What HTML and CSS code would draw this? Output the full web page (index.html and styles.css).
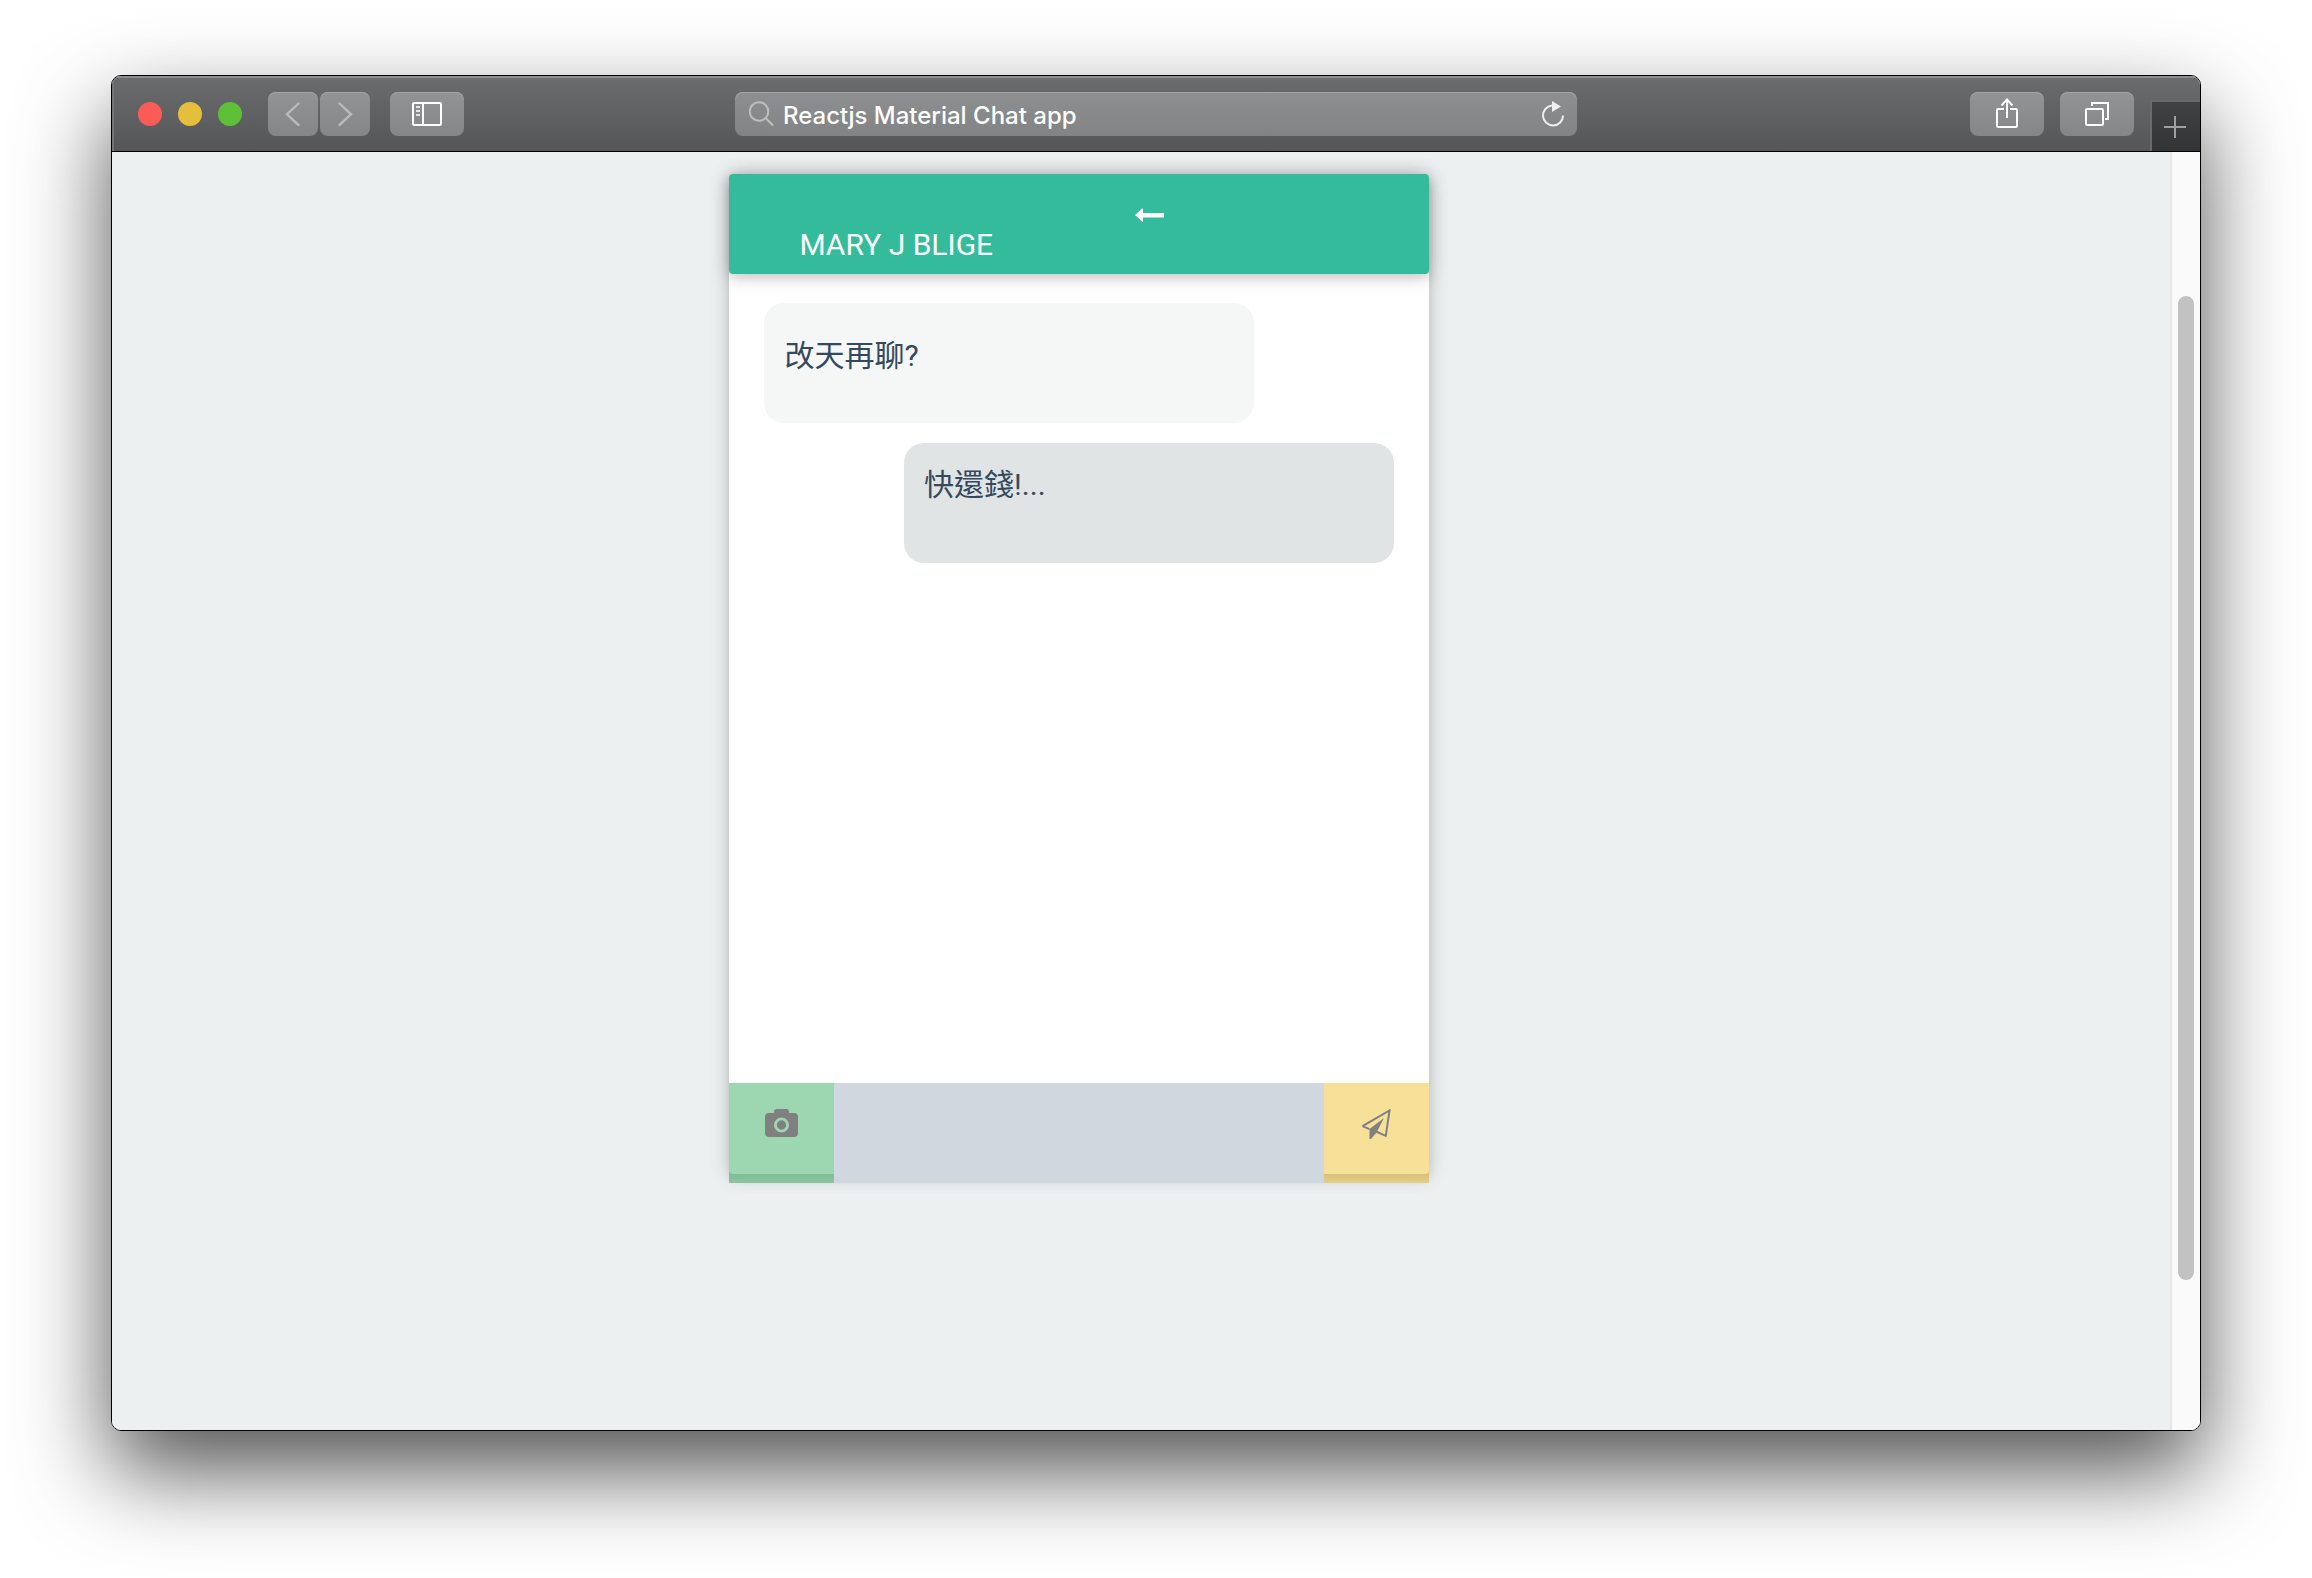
FILE: index.html
```html
<!DOCTYPE html>
<html lang="zh-Hant">
<head>
<meta charset="utf-8">
<title>Reactjs Material Chat app</title>
<link rel="stylesheet" href="styles.css">
</head>
<body>
<div class="window">
  <header class="toolbar">
    <div class="toolbar-left">
      <div class="lights">
        <button class="light light-close" aria-label="Close"></button>
        <button class="light light-minimize" aria-label="Minimize"></button>
        <button class="light light-zoom" aria-label="Zoom"></button>
      </div>
      <div class="history">
        <button class="tool tool-narrow" aria-label="Back"><svg width="50" height="44" viewBox="0 0 50 44" fill="none" stroke="#b9babb" stroke-width="2.4" stroke-linecap="round"><path d="M30.500 11.500L19 22.300L30.500 33"/></svg></button>
        <button class="tool tool-narrow" aria-label="Forward"><svg width="50" height="44" viewBox="0 0 50 44" fill="none" stroke="#b9babb" stroke-width="2.4" stroke-linecap="round"><path d="M19.500 11.500L31 22.300L19.500 33"/></svg></button>
      </div>
      <button class="tool" aria-label="Sidebar"><svg width="74" height="44" viewBox="0 0 74 44" fill="none" stroke="#fff" stroke-width="2"><rect x="23" y="11" width="28" height="22" rx="1"/><path d="M33 11V33"/><path d="M26 15H30M26 19H30M26 23H30" stroke="#e4e4e4"/></svg></button>
    </div>
    <div class="address">
      <svg width="26" height="26" viewBox="0 0 26 26" fill="none" stroke="#bebebf" stroke-width="2"><circle cx="10" cy="10.500" r="9.300"/><path d="M16.800 17.300L24 24.500"/></svg>
      <input class="address-input" type="text" aria-label="Address" value="Reactjs Material Chat app">
      <button class="reload" aria-label="Reload"><svg width="24" height="28" viewBox="0 0 24 28"><path d="M11 5.500A10 10 0 1 0 22 15.500" fill="none" stroke="#eee" stroke-width="2"/><path d="M11 1L20 6.500L11 12Z" fill="#eee"/></svg></button>
    </div>
    <div class="toolbar-right">
      <button class="tool" aria-label="Share"><svg width="74" height="44" viewBox="0 0 74 44" fill="none" stroke="#fff" stroke-width="2"><path d="M34 17H28Q27 17 27 18V34Q27 35 28 35H46Q47 35 47 34V18Q47 17 46 17H40M37 26V8M31.500 13.500L37 7.500L42.500 13.500"/></svg></button>
      <button class="tool" aria-label="Show tabs"><svg width="74" height="44" viewBox="0 0 74 44" fill="none" stroke="#fff" stroke-width="2"><rect x="26" y="17" width="17" height="16" rx="1"/><path d="M32 14V11H48V27H45"/></svg></button>
      <button class="new-tab" aria-label="New tab"><svg width="22" height="22" viewBox="0 0 22 22" stroke="#a0a0a0" stroke-width="2"><path d="M11 0V22M0 11H22"/></svg></button>
    </div>
  </header>
  <div class="viewport">
    <main class="page">
      <section class="chat">
        <header class="chat-header">
          <h1 class="chat-title">MARY J BLIGE</h1>
          <a class="chat-back" href="#" aria-label="Back to contacts"><svg width="30" height="14" viewBox="0 0 30 14" fill="#fff"><path d="M0 7L7 0.500H8V5H29V9.500H8V13.500H7Z"/></svg></a>
        </header>
        <div class="messages">
          <p class="message message-received">改天再聊?</p>
          <p class="message message-sent">快還錢!...</p>
        </div>
        <form class="composer">
          <button class="action action-photo" type="button" aria-label="Send a photo"><span class="action-face"><svg width="33" height="30" viewBox="0 0 33 30"><path fill="#808080" fill-rule="evenodd" d="M4 4H9V3Q9 0 12 0H21Q24 0 24 3V4H29Q33 4 33 8V24Q33 28 29 28H4Q0 28 0 24V8Q0 4 4 4ZM16.500 8.500A7.500 7.500 0 1 0 16.500 23.500A7.500 7.500 0 1 0 16.500 8.500ZM16.500 11.300A4.700 4.700 0 1 1 16.500 20.700A4.700 4.700 0 1 1 16.500 11.300Z"/></svg></span></button>
          <input class="composer-input" type="text" aria-label="Message">
          <button class="action action-send" type="button" aria-label="Send"><span class="action-face"><svg width="32" height="30" viewBox="0 0 32 30"><path d="M1.500 17.200L28.500 1.500L24.800 26.800L15 22.500M8.500 20.200L1.500 17.200" fill="none" stroke="#808080" stroke-width="2"/><path d="M23 9L15.500 23.500L10 30H8.500V20Z" fill="#808080"/></svg></span></button>
        </form>
      </section>
    </main>
    <div class="scrollbar"><div class="scrollbar-thumb"></div></div>
  </div>
</div>
</body>
</html>
```
FILE: styles.css
```css
* {
  box-sizing: border-box;
}

body {
  margin: 0;
  min-height: 100vh;
  padding: 75px 111px 147px;
  display: flex;
  background: #fff;
  font-family: Roboto, "Noto Sans CJK TC", sans-serif;
}

button {
  border: 0;
  padding: 0;
  font: inherit;
  background: none;
}

svg {
  display: block;
}

.window {
  flex: 1;
  min-width: 0;
  display: flex;
  flex-direction: column;
  border: 1px solid #000;
  border-radius: 10px;
  overflow: hidden;
  box-shadow: 0 40px 90px rgba(0, 0, 0, .68);
}

.toolbar {
  display: grid;
  grid-template-columns: 1fr minmax(0, 842px) 1fr;
  height: 76px;
  padding-top: 16px;
  border-bottom: 1px solid #000;
  background: linear-gradient(#6b6c6e, #555658);
  box-shadow: inset 0 2px #8d8c90, inset 2px 0 #737476;
}

.toolbar-left {
  display: flex;
  gap: 20px;
  padding-left: 26px;
}

.lights {
  display: flex;
  align-items: center;
  gap: 16px;
  height: 44px;
  margin-right: 6px;
}

.light {
  width: 24px;
  height: 24px;
  border-radius: 50%;
}

.light-close { background: #fc5b57; }
.light-minimize { background: #e5bf3c; }
.light-zoom { background: #5ec038; }

.history {
  display: flex;
  gap: 2px;
}

.tool,
.address {
  height: 44px;
  border-radius: 8px;
  background: linear-gradient(#929395, #858688);
  box-shadow: inset 0 1px #a5a6a8;
}

.tool {
  width: 74px;
}

.tool-narrow {
  width: 50px;
}

.address {
  display: flex;
  align-items: center;
  gap: 8px;
  padding: 0 12px 0 14px;
  background: linear-gradient(#8e8f91, #828385);
}

.address-input {
  flex: 1;
  min-width: 0;
  height: 44px;
  padding: 2px 0 0;
  border: 0;
  background: none;
  color: #fff;
  font: 500 24px/32px Inter, sans-serif;
}

.toolbar-right {
  display: flex;
  justify-content: flex-end;
  gap: 16px;
}

.new-tab {
  display: grid;
  place-items: center;
  align-self: flex-end;
  width: 50px;
  height: 51px;
  padding-right: 2px;
  border-top: 2px solid #6a6b6c;
  border-left: 2px solid #6a6b6c;
  background: linear-gradient(#414243, #333435);
}

.viewport {
  flex: 1;
  display: flex;
  background: #ecf0f1;
}

.page {
  flex: 1;
  padding: 22px 0 80px;
}

.chat {
  display: flex;
  flex-direction: column;
  width: 34%;
  height: 1000px;
  margin-left: 30%;
  border-radius: 4px;
  background: #fff;
  box-shadow: 0 4px 8px rgba(0, 0, 0, .08), 0 2px 20px rgba(0, 0, 0, .2);
}

.chat-header {
  display: grid;
  grid-template-columns: 1fr 1fr;
  flex: none;
  height: 100px;
  padding-left: 70px;
  border-radius: 4px;
  background: #34bb9c;
  color: #fff;
  box-shadow: 0 4px 8px rgba(0, 0, 0, .08), 0 2px 20px rgba(0, 0, 0, .2);
}

.chat-title {
  margin: 0;
  padding-top: 49px;
  font-size: 30px;
  font-weight: 400;
  line-height: 44px;
}

.chat-back {
  justify-self: start;
  align-self: start;
  margin: 34px 0 0 21px;
}

.messages {
  flex: 1;
  display: flex;
  flex-direction: column;
  gap: 20px;
  padding: 29px 35px;
}

.message {
  width: 490px;
  max-width: 100%;
  height: 120px;
  margin: 0;
  padding: 20px;
  border-radius: 20px;
  color: #34495e;
  font-size: 30px;
  line-height: 44px;
}

.message-received {
  padding-top: 31px;
  background: #f5f7f7;
}

.message-sent {
  align-self: flex-end;
  background: #e0e4e5;
}

.composer {
  display: grid;
  grid-template-columns: 15% 1fr 15%;
  flex: none;
  height: 100px;
  margin-bottom: -9px;
}

.composer-input {
  min-width: 0;
  padding: 0 20px;
  border: 0;
  background: #d0d7df;
  color: #34495e;
  font: inherit;
  font-size: 30px;
}

.action {
  display: block;
  height: 100px;
  padding-bottom: 9px;
}

.action-face {
  display: flex;
  justify-content: center;
  height: 91px;
  padding-top: 26px;
}

.action-photo {
  background: linear-gradient(#81bc96 91px, #8ac6a0 100px);
}

.action-photo .action-face {
  border-bottom-left-radius: 4px;
  background: #9dd7b1;
}

.action-send {
  background: linear-gradient(#d8c17a 91px, #e4cf88 100px);
}

.action-send .action-face {
  border-bottom-right-radius: 4px;
  background: #f7e199;
}

.scrollbar {
  width: 30px;
  padding: 144px 6px 0;
  border-left: 2px solid #e7e7e7;
  background: #fafafa;
}

.scrollbar-thumb {
  width: 16px;
  height: 984px;
  border-radius: 8px;
  background: #c2c2c2;
}
```
